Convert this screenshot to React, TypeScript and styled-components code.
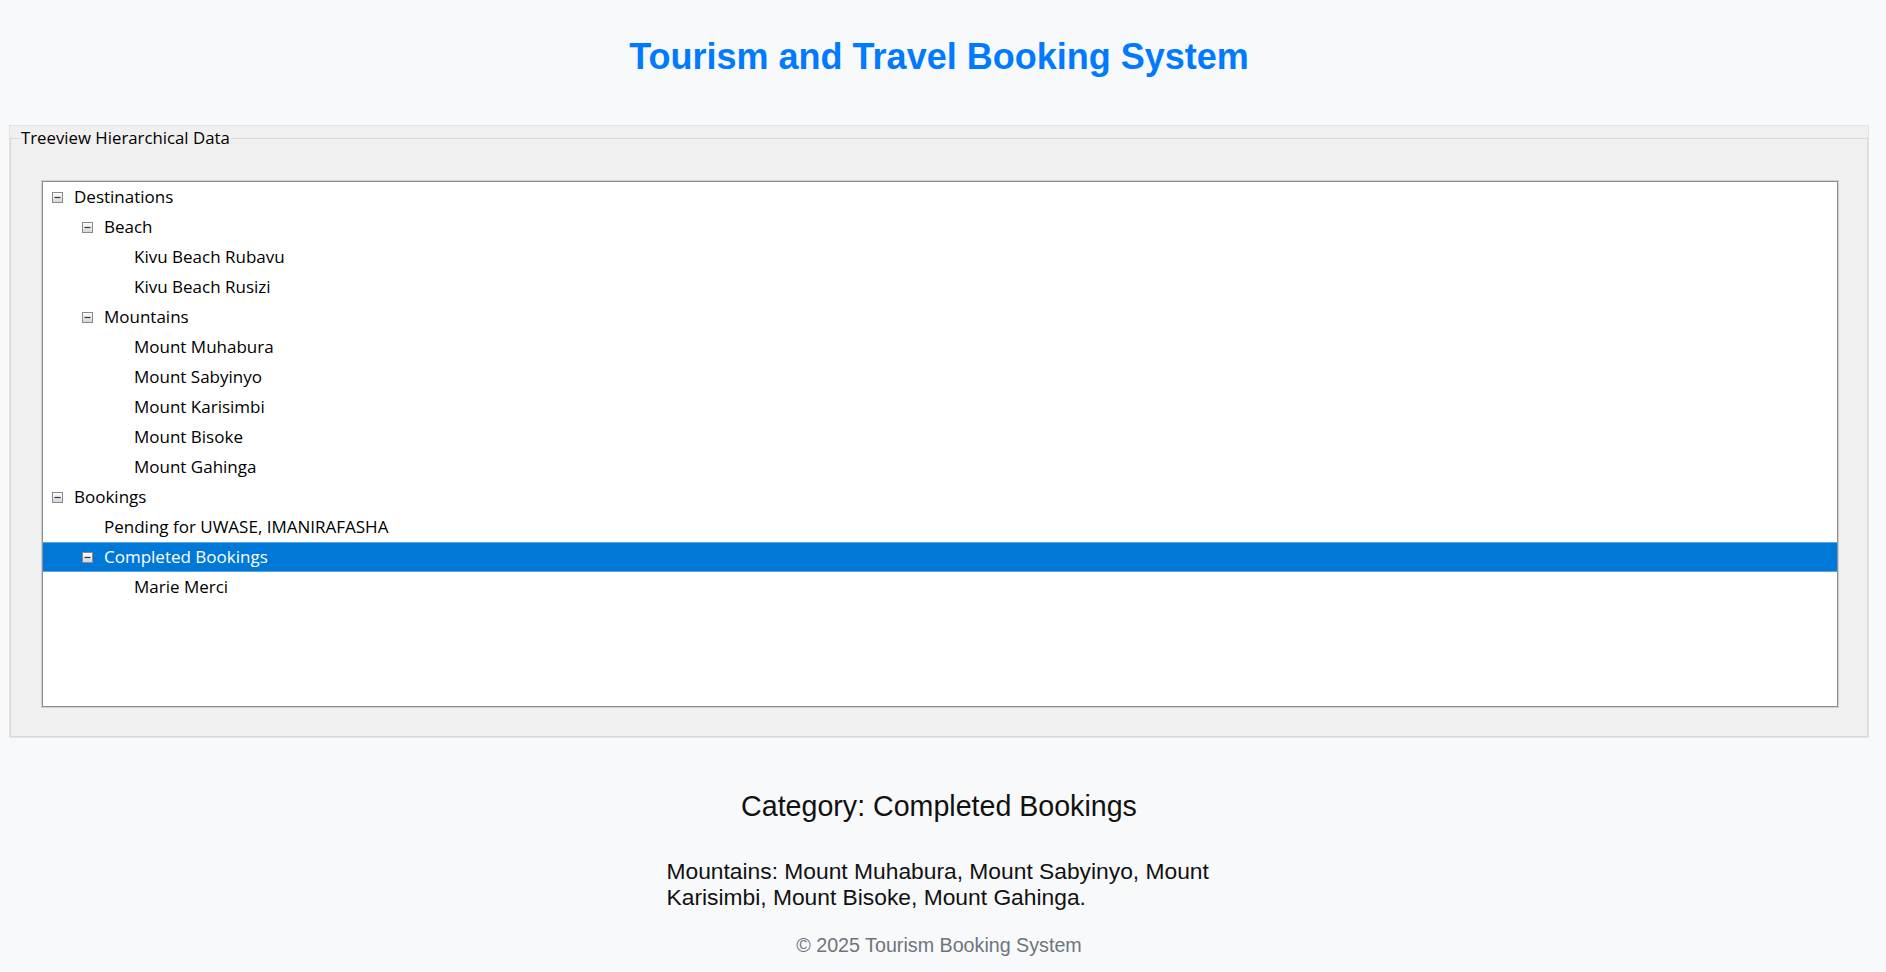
import React from "react";
import styled, { createGlobalStyle } from "styled-components";

const GlobalStyle = createGlobalStyle`
  html, body { margin: 0; padding: 0; }
  body {
    background: #f8f9fa;
    font-family: "Liberation Sans", Arial, sans-serif;
    color: #212529;
  }
`;

const Page = styled.div`
  box-sizing: border-box;
  min-height: 972px;
  padding: 36px 17px 0 9px;
`;

const Title = styled.h1`
  margin: 0;
  text-align: center;
  font-size: 36px;
  line-height: 41px;
  font-weight: 700;
  color: #007bff;
`;

const Panel = styled.div`
  box-sizing: border-box;
  margin-top: 48px;
  height: 613px;
  background: #f0f0f0;
  border: 1px solid #e4e4e4;
  padding-top: 1px;
  display: flex;
  flex-direction: column;
`;

const Group = styled.fieldset`
  flex: 1;
  margin: 0;
  padding: 0 0 0 9px;
  border: 1px solid #d9d9d9;
  min-width: 0;
  font-family: "Open Sans", "Noto Sans", sans-serif;
`;

const Legend = styled.legend`
  padding: 0 1px;
  font-size: 16.8px;
  line-height: 22px;
  color: #000;
`;

const TreeBox = styled.div`
  box-sizing: border-box;
  margin: 32px 29px 0 22px;
  height: 526px;
  background: #fff;
  border: 1px solid #8c9199;
  box-shadow: 0 0 0 1px rgba(140, 145, 153, 0.35);
`;

const Row = styled.div<{ $level: number; $selected?: boolean }>`
  display: flex;
  align-items: center;
  height: 30px;
  padding-left: ${(p) => 9 + p.$level * 30}px;
  background: ${(p) => (p.$selected ? "#0078d7" : "transparent")};
  box-shadow: ${(p) =>
    p.$selected ? "inset 0 1px 0 #5ea6e6, inset 0 -1px 0 #5ea6e6" : "none"};
  color: ${(p) => (p.$selected ? "#fff" : "#000")};
  font-size: 17px;
  line-height: 22px;
  white-space: nowrap;
`;

const Toggle = styled.span`
  display: inline-flex;
  width: 11px;
  height: 11px;
  margin-right: 11px;
  flex: none;
`;

const Spacer = styled.span`
  display: inline-block;
  width: 22px;
  flex: none;
`;

const Category = styled.h3`
  margin: 52px 0 0;
  text-align: center;
  font-size: 28.6px;
  line-height: 33px;
  font-weight: 400;
  color: #111;
`;

const Desc = styled.p`
  width: 545px;
  margin: 34.5px auto 0;
  text-align: left;
  font-size: 22.8px;
  line-height: 26.6px;
  color: #111;
`;

const Footer = styled.footer`
  margin-top: 23px;
  text-align: center;
  font-size: 19.7px;
  line-height: 23px;
  color: #6c757d;
`;

const MinusIcon = () => (
  <svg width="11" height="11" viewBox="0 0 11 11">
    <defs>
      <linearGradient id="mg" x1="0" y1="0" x2="0" y2="1">
        <stop offset="0" stopColor="#ffffff" />
        <stop offset="1" stopColor="#d4d4d4" />
      </linearGradient>
    </defs>
    <rect x="0.5" y="0.5" width="10" height="10" fill="url(#mg)" stroke="#8a8a8a" />
    <line x1="2.5" y1="5.5" x2="8.5" y2="5.5" stroke="#2a3556" strokeWidth="1.2" />
  </svg>
);

type Node = { label: string; level: number; expandable?: boolean; selected?: boolean };

const rows: Node[] = [
  { label: "Destinations", level: 0, expandable: true },
  { label: "Beach", level: 1, expandable: true },
  { label: "Kivu Beach Rubavu", level: 2 },
  { label: "Kivu Beach Rusizi", level: 2 },
  { label: "Mountains", level: 1, expandable: true },
  { label: "Mount Muhabura", level: 2 },
  { label: "Mount Sabyinyo", level: 2 },
  { label: "Mount Karisimbi", level: 2 },
  { label: "Mount Bisoke", level: 2 },
  { label: "Mount Gahinga", level: 2 },
  { label: "Bookings", level: 0, expandable: true },
  { label: "Pending for UWASE, IMANIRAFASHA", level: 1 },
  { label: "Completed Bookings", level: 1, expandable: true, selected: true },
  { label: "Marie Merci", level: 2 },
];

export default function App() {
  return (
    <>
      <GlobalStyle />
      <Page>
        <Title>Tourism and Travel Booking System</Title>
        <Panel>
          <Group>
            <Legend>Treeview Hierarchical Data</Legend>
            <TreeBox>
              {rows.map((r) => (
                <Row key={r.label} $level={r.level} $selected={r.selected}>
                  {r.expandable ? (
                    <Toggle>
                      <MinusIcon />
                    </Toggle>
                  ) : (
                    <Spacer />
                  )}
                  <span>{r.label}</span>
                </Row>
              ))}
            </TreeBox>
          </Group>
        </Panel>
        <Category>Category: Completed Bookings</Category>
        <Desc>
          Mountains: Mount Muhabura, Mount Sabyinyo, Mount Karisimbi, Mount Bisoke, Mount Gahinga.
        </Desc>
        <Footer>© 2025 Tourism Booking System</Footer>
      </Page>
    </>
  );
}
